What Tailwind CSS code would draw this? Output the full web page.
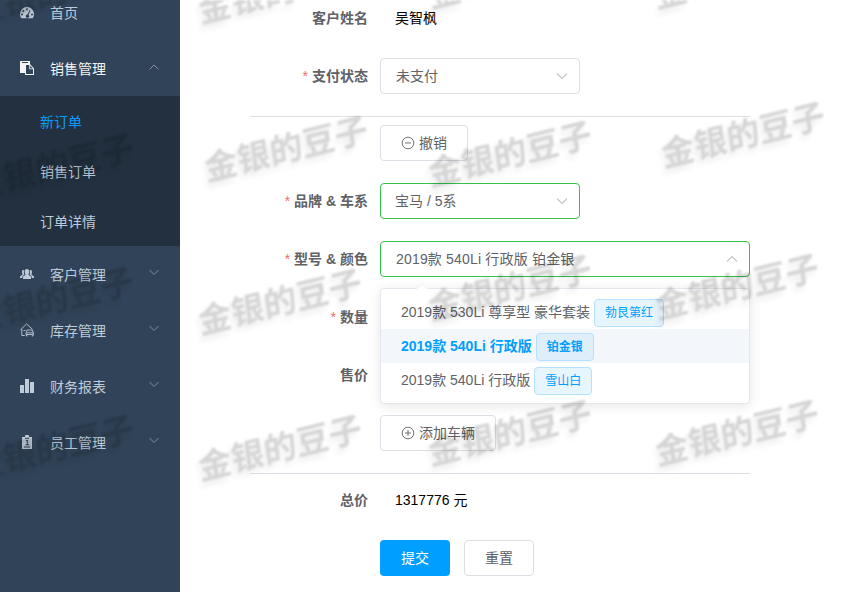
<!DOCTYPE html>
<html lang="zh-CN">
<head>
  <meta charset="UTF-8">
  <meta name="viewport" content="width=device-width, initial-scale=1.0">
  <title>新订单</title>
  <script src="https://cdn.jsdelivr.net/npm/@tailwindcss/browser@4"></script>
</head>
<body class="relative h-[592px] overflow-hidden bg-white font-['Liberation_Sans','Noto_Sans_CJK_SC',sans-serif] text-sm text-[#606266]">

  <div class="flex h-full">
    <!-- 侧边栏 -->
    <aside class="w-[180px] shrink-0 bg-[#304358] text-[#bfcbd9]">
      <nav class="-mt-[15px]">
        <a class="flex h-14 items-center pl-5">
          <svg class="mr-4 mb-px h-3.5 w-3.5" viewBox="0 0 14 14" fill="currentColor"><path fill-rule="evenodd" d="M7 1a7 7 0 0 0-7 7c0 1.6.5 3 1.300 4.300h11.400A7 7 0 0 0 14 8a7 7 0 0 0-7-7zM7 2.300a1 1 0 1 1 0 2 1 1 0 0 1 0-2zM3.300 4a1 1 0 1 1 0 2 1 1 0 0 1 0-2zM2 7.500a1 1 0 1 1 0 2 1 1 0 0 1 0-2zM12 7.500a1 1 0 1 1 0 2 1 1 0 0 1 0-2zM9.500 4l1 .400-1.900 4.500a1.700 1.700 0 1 1-1.100-.400z"/></svg>
          <span>首页</span>
        </a>
        <a class="-mt-px flex h-14 items-center pt-px pl-5 text-[#f4f4f5]">
          <svg class="mr-4 mb-0.5 h-3.5 w-3.5" viewBox="0 0 14 14" fill="currentColor"><path d="M0 0h10v3H5v9H0z"/><path fill-rule="evenodd" d="M5 3h5l4 4.500V14H5zM6 4v9h7V8.300H9.300V4zM10.200 4.600v2.800h2.500z"/><path d="M2 1.500h6" stroke="#304358"/></svg>
          <span>销售管理</span>
          <svg class="ml-auto mr-5 mb-0.5 h-3 w-3" viewBox="0 0 12 12" fill="none" stroke="#87919d"><path d="M1.500 7.500 6 3l4.500 4.500"/></svg>
        </a>
        <div class="bg-[#22303f] pl-10 leading-[50px]">
          <a class="block h-[50px] pt-px text-[#0a9cff]">新订单</a>
          <a class="block h-[50px] pt-px">销售订单</a>
          <a class="block h-[50px] pt-px">订单详情</a>
        </div>
        <a class="flex h-14 items-center pt-px pl-5">
          <svg class="mr-4 mb-0.5 h-3.5 w-3.5" viewBox="0 0 14 14" fill="currentColor"><path d="M7 2c1.500 0 2.300 1 2.300 2.500S8.600 7 8.300 7.600c0 1 2.700 1.100 2.700 3V12H3v-1.400c0-1.900 2.700-2 2.700-3C5.400 7 4.700 6 4.700 4.500S5.500 2 7 2zM4.200 3.100C2.800 2.700 1.800 3.600 1.900 5c.1 1.300.7 1.700.7 2.400C2.600 8 0 8.300 0 10v1h2.200c0-2.100 1-2.500 2.400-3.200C3.900 6.700 3.500 5 4.200 3.100zM9.800 3.100c1.400-.4 2.400.5 2.300 1.900-.1 1.300-.7 1.700-.7 2.400 0 .6 2.600.9 2.600 2.600v1h-2.200c0-2.100-1-2.500-2.400-3.200.7-1.100 1.100-2.800.4-4.700z"/></svg>
          <span>客户管理</span>
          <svg class="ml-auto mr-5 mb-[5px] h-3 w-3" viewBox="0 0 12 12" fill="none" stroke="#87919d"><path d="M1.500 4 6 8.500 10.500 4"/></svg>
        </a>
        <a class="flex h-14 items-center pt-px pl-5">
          <svg class="mr-4 mb-0.5 h-3.5 w-3.5" viewBox="0 0 14 14" fill="none" stroke="currentColor" stroke-width=".9"><path d="M.5 6.800 6.500 1l6 5.300M1.800 6v6.500h3M3.500 7.500h2M6 11.500V9.800L7.200 7h5l1.200 2.800v1.700zM6.500 9.800h6.800M6.500 11.500V13h1.200M11.800 13H13v-1.500"/></svg>
          <span>库存管理</span>
          <svg class="ml-auto mr-5 mb-[5px] h-3 w-3" viewBox="0 0 12 12" fill="none" stroke="#87919d"><path d="M1.500 4 6 8.500 10.500 4"/></svg>
        </a>
        <a class="flex h-14 items-center pt-px pl-5">
          <svg class="mr-4 mb-0.5 h-3.5 w-3.5" viewBox="0 0 14 14" fill="currentColor"><path d="M0 6h4v8H0zM5 0h4v14H5zM10 3h4v11h-4z"/></svg>
          <span>财务报表</span>
          <svg class="ml-auto mr-5 mb-[5px] h-3 w-3" viewBox="0 0 12 12" fill="none" stroke="#87919d"><path d="M1.500 4 6 8.500 10.500 4"/></svg>
        </a>
        <a class="flex h-14 items-center pt-px pl-5">
          <svg class="mr-4 mb-0.5 h-3.5 w-3.5" viewBox="0 0 14 14" fill="currentColor"><path d="M2 2h3V.8C5 .3 5.400 0 6 0h2c.6 0 1 .3 1 .8V2h3v12H2z"/><path d="M5 3.200h4M6 5.500h1.300v4.200M5.500 9.800h3.500M4 12h6" fill="none" stroke="#304358" stroke-width="1.100"/></svg>
          <span>员工管理</span>
          <svg class="ml-auto mr-5 mb-[5px] h-3 w-3" viewBox="0 0 12 12" fill="none" stroke="#87919d"><path d="M1.500 4 6 8.500 10.500 4"/></svg>
        </a>
      </nav>
    </aside>

    <!-- 订单表单 -->
    <main class="pl-[70px]">
      <form class="flex w-[500px] flex-col">
        <div class="mb-[22px] flex h-9 items-center">
          <label class="w-[130px] pr-3 text-right font-bold">客户姓名</label>
          <span class="pl-[15px] text-black">吴智枫</span>
        </div>
        <div class="mb-[22px] flex h-9 items-center">
          <label class="w-[130px] pr-3 text-right font-bold"><span class="mr-1 font-normal text-[#f56c6c]">*</span>支付状态</label>
          <div class="flex h-9 w-[200px] items-center justify-between rounded border border-[#dcdfe6] pr-[10px] pl-[15px]">
            <span>未支付</span>
            <svg class="h-3.5 w-3.5" viewBox="0 0 14 14" fill="none" stroke="#c0c4cc" stroke-width="1.100"><path d="M2 4.500 7 9.500 12 4.500"/></svg>
          </div>
        </div>

        <div class="mb-2 h-px bg-[#dcdfe6]"></div>

        <div class="mb-[22px] flex h-9 pl-[130px]">
          <button type="button" class="flex h-9 items-center gap-[4px] rounded border border-[#dcdfe6] px-5">
            <svg class="h-3.5 w-3.5" viewBox="0 0 14 14" fill="none" stroke="currentColor" stroke-width=".9"><circle cx="7" cy="7" r="5.800"/><path d="M4 7h6"/></svg>
            <span>撤销</span>
          </button>
        </div>
        <div class="mb-[22px] flex h-9 items-center">
          <label class="w-[130px] pr-3 text-right font-bold"><span class="mr-1 font-normal text-[#f56c6c]">*</span>品牌 &amp; 车系</label>
          <div class="flex h-9 w-[200px] items-center justify-between rounded border border-[#38c04e] pr-[10px] pl-[14px]">
            <span>宝马 / 5系</span>
            <svg class="h-3.5 w-3.5" viewBox="0 0 14 14" fill="none" stroke="#c0c4cc" stroke-width="1.100"><path d="M2 4.500 7 9.500 12 4.500"/></svg>
          </div>
        </div>
        <div class="mb-[22px] flex h-9 items-center">
          <label class="w-[130px] pr-3 text-right font-bold"><span class="mr-1 font-normal text-[#f56c6c]">*</span>型号 &amp; 颜色</label>
          <div class="relative flex h-9 w-[370px] items-center justify-between rounded border border-[#38c04e] pr-[10px] pl-[15px]">
            <span class="tracking-[0.18px]">2019款 540Li 行政版 铂金银</span>
            <svg class="h-3.5 w-3.5" viewBox="0 0 14 14" fill="none" stroke="#c0c4cc" stroke-width="1.100"><path d="M2 9.500 7 4.500 12 9.500"/></svg>

            <!-- 下拉选项 -->
            <div class="absolute top-[46px] -left-px z-10 h-[116px] w-[370px] rounded border border-[#e4e7ed] bg-white py-1.5 shadow-[0_2px_12px_rgba(0,0,0,0.1)]">
              <svg class="absolute -top-[6px] left-[35px] h-[7px] w-3" viewBox="0 0 12 7"><path d="M0 6.500 6 .5l6 6V7H0z" fill="#fff"/><path d="M0 6 6 .5 12 6" fill="none" stroke="#ebeef5"/></svg>
              <div class="flex h-[34px] items-center gap-1 px-5">
                <span>2019款 530Li 尊享型 豪华套装</span>
                <span class="mt-0.5 flex h-7 items-center rounded border border-[#b3e1ff] bg-[#e6f5ff] px-[10px] text-xs text-[#009fff]">勃艮第红</span>
              </div>
              <div class="flex h-[34px] items-center gap-1 bg-[#f3f7fb] px-5 font-bold text-[#009fff]">
                <span>2019款 540Li 行政版</span>
                <span class="mt-0.5 flex h-7 items-center rounded border border-[#b3e1ff] bg-[#deeffb] px-[10px] text-xs">铂金银</span>
              </div>
              <div class="flex h-[34px] items-center gap-1 px-5">
                <span>2019款 540Li 行政版</span>
                <span class="mt-0.5 flex h-7 items-center rounded border border-[#b3e1ff] bg-[#e6f5ff] px-[10px] text-xs text-[#009fff]">雪山白</span>
              </div>
            </div>
          </div>
        </div>
        <div class="mb-[22px] flex h-9 items-center">
          <label class="w-[130px] pr-3 text-right font-bold"><span class="mr-1 font-normal text-[#f56c6c]">*</span>数量</label>
        </div>
        <div class="mb-[22px] flex h-9 items-center">
          <label class="w-[130px] pr-3 text-right font-bold">售价</label>
        </div>
        <div class="mb-[22px] flex h-9 pl-[130px]">
          <button type="button" class="flex h-9 items-center gap-[4px] rounded border border-[#dcdfe6] px-5">
            <svg class="h-3.5 w-3.5" viewBox="0 0 14 14" fill="none" stroke="currentColor" stroke-width=".9"><circle cx="7" cy="7" r="5.800"/><path d="M4 7h6M7 4v6"/></svg>
            <span>添加车辆</span>
          </button>
        </div>

        <div class="mb-2 h-px bg-[#dcdfe6]"></div>

        <div class="mb-[22px] flex h-9 items-center">
          <label class="w-[130px] pr-3 text-right font-bold">总价</label>
          <span class="pl-[15px] text-black">1317776 元</span>
        </div>
        <div class="flex gap-3.5 pl-[130px]">
          <button type="button" class="h-9 w-[70px] rounded bg-[#009fff] text-white">提交</button>
          <button type="button" class="h-9 w-[70px] rounded border border-[#dcdfe6]">重置</button>
        </div>
      </form>
    </main>
  </div>

  <!-- 水印 -->
  <svg class="pointer-events-none absolute inset-0 z-20 h-[592px] w-[862px] font-['Noto_Sans_CJK_SC',sans-serif] text-[33.5px] font-bold opacity-16 blur-[0.9px] drop-shadow-[-3px_5px_3px_rgba(0,0,0,0.45)]" viewBox="0 0 862 592" text-anchor="middle">
    <text transform="translate(52 -8) rotate(-14) skewX(-6)" y="12">金银的豆子</text>
    <text transform="translate(280 -9) rotate(-14) skewX(-6)" y="12">金银的豆子</text>
    <text transform="translate(510 -24) rotate(-14) skewX(-6)" y="12">金银的豆子</text>
    <text transform="translate(736 -24) rotate(-14) skewX(-6)" y="12">金银的豆子</text>
    <text transform="translate(52 167) rotate(-14) skewX(-6)" y="12">金银的豆子</text>
    <text transform="translate(286 149) rotate(-14) skewX(-6)" y="12">金银的豆子</text>
    <text transform="translate(510 154) rotate(-14) skewX(-6)" y="12">金银的豆子</text>
    <text transform="translate(743 135) rotate(-14) skewX(-6)" y="12">金银的豆子</text>
    <text transform="translate(52 300) rotate(-14) skewX(-6)" y="12">金银的豆子</text>
    <text transform="translate(280 302) rotate(-14) skewX(-6)" y="12">金银的豆子</text>
    <text transform="translate(510 288) rotate(-14) skewX(-6)" y="12">金银的豆子</text>
    <text transform="translate(737 287) rotate(-14) skewX(-6)" y="12">金银的豆子</text>
    <text transform="translate(52 448) rotate(-14) skewX(-6)" y="12">金银的豆子</text>
    <text transform="translate(280 448) rotate(-14) skewX(-6)" y="12">金银的豆子</text>
    <text transform="translate(510 433) rotate(-14) skewX(-6)" y="12">金银的豆子</text>
    <text transform="translate(737 433) rotate(-14) skewX(-6)" y="12">金银的豆子</text>
  </svg>

</body>
</html>
